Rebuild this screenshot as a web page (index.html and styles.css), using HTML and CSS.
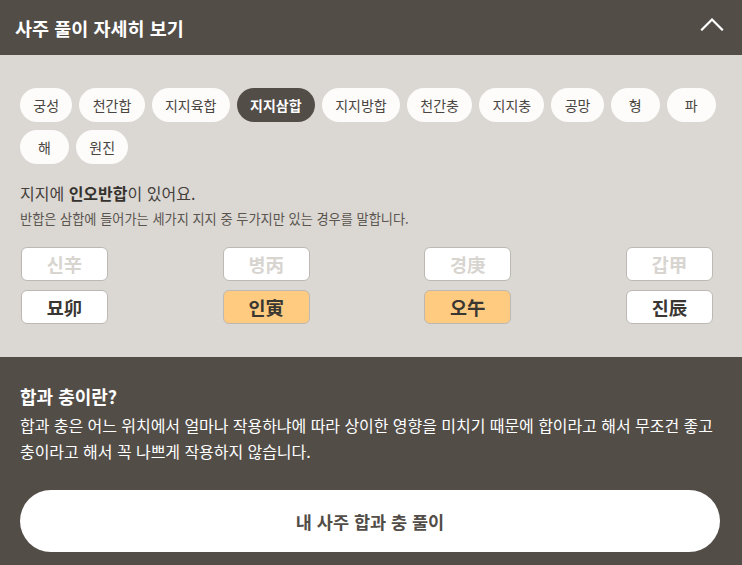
FILE: index.html
```html
<!DOCTYPE html>
<html lang="ko">
<head>
<meta charset="utf-8">
<title>사주 풀이 자세히 보기</title>
<link rel="stylesheet" href="styles.css">
</head>
<body>
<div class="page">
  <header class="header">
    <h1 class="header-title">사주 풀이 자세히 보기</h1>
    <svg class="chevron" width="24" height="14" viewBox="0 0 24 14" aria-hidden="true">
      <polyline points="2,12.5 12,2.5 22,12.5" fill="none" stroke="#ffffff" stroke-width="2.2" stroke-linecap="square"/>
    </svg>
  </header>

  <section class="detail">
    <div class="chips">
      <span class="chip">궁성</span>
      <span class="chip">천간합</span>
      <span class="chip">지지육합</span>
      <span class="chip chip-active">지지삼합</span>
      <span class="chip">지지방합</span>
      <span class="chip">천간충</span>
      <span class="chip">지지충</span>
      <span class="chip">공망</span>
      <span class="chip">형</span>
      <span class="chip">파</span>
      <span class="chip">해</span>
      <span class="chip">원진</span>
    </div>

    <p class="summary">지지에 <strong>인오반합</strong>이 있어요.</p>
    <p class="summary-sub">반합은 삼합에 들어가는 세가지 지지 중 두가지만 있는 경우를 말합니다.</p>

    <div class="pillars">
      <div class="pillar">
        <span class="cell cell-dim">신辛</span>
        <span class="cell">묘卯</span>
      </div>
      <div class="pillar">
        <span class="cell cell-dim">병丙</span>
        <span class="cell cell-hl">인寅</span>
      </div>
      <div class="pillar">
        <span class="cell cell-dim">경庚</span>
        <span class="cell cell-hl">오午</span>
      </div>
      <div class="pillar">
        <span class="cell cell-dim">갑甲</span>
        <span class="cell">진辰</span>
      </div>
    </div>
  </section>

  <section class="info">
    <h2 class="info-title">합과 충이란?</h2>
    <p class="info-text">합과 충은 어느 위치에서 얼마나 작용하냐에 따라 상이한 영향을 미치기 때문에 합이라고 해서 무조건 좋고<br>충이라고 해서 꼭 나쁘게 작용하지 않습니다.</p>
    <button class="cta" type="button">내 사주 합과 충 풀이</button>
  </section>
</div>
</body>
</html>
```

FILE: styles.css
```css
* {
  box-sizing: border-box;
}

html, body {
  margin: 0;
  padding: 0;
  background: #524d47;
}

body {
  font-family: "Noto Sans CJK KR", "Noto Sans", sans-serif;
  color: #3a3632;
}

.page {
  width: 742px;
}

.header {
  height: 55px;
  background: #524d47;
  display: flex;
  align-items: center;
  justify-content: space-between;
  padding: 0 18px 0 15px;
}

.header-title {
  margin: 0;
  font-size: 18.5px;
  font-weight: 700;
  color: #ffffff;
  letter-spacing: 0;
  line-height: 26px;
}

.chevron {
  display: block;
  margin-top: -7px;
}

.detail {
  background: #dbd8d4;
  padding: 33px 20px 33px 20px;
}

.chips {
  display: flex;
  flex-wrap: wrap;
  gap: 8px 7px;
}

.chip {
  height: 34px;
  min-width: 49px;
  padding: 0 13.3px;
  border-radius: 17px;
  background: #fdfcfb;
  color: #4a4540;
  font-size: 14px;
  display: flex;
  align-items: center;
  justify-content: center;
}

.chip-active {
  background: #524d47;
  color: #ffffff;
  font-weight: 700;
}

.summary {
  margin: 18px 0 0 0;
  font-size: 16px;
  line-height: 22px;
  color: #45403b;
}

.summary strong {
  font-weight: 700;
  color: #36322e;
}

.summary-sub {
  margin: 5px 0 0 0;
  font-size: 13.2px;
  line-height: 19px;
  color: #5a554f;
}

.pillars {
  display: flex;
  justify-content: space-between;
  margin: 19px 9px 0 1px;
}

.pillar {
  display: flex;
  flex-direction: column;
  gap: 9px;
}

.cell {
  width: 87px;
  height: 34px;
  border: 1px solid #bdb8b3;
  border-radius: 6px;
  background: #ffffff;
  display: flex;
  align-items: center;
  justify-content: center;
  font-size: 18.5px;
  font-weight: 700;
  color: #3a3632;
}

.cell-dim {
  color: #d8d4d0;
}

.cell-hl {
  background: #fecb80;
}

.info {
  background: #524d47;
  padding: 27px 20px 13px 20px;
}

.info-title {
  margin: 0;
  font-size: 18px;
  font-weight: 700;
  color: #ffffff;
  line-height: 24px;
}

.info-text {
  margin: 4px 0 0 0;
  font-size: 16px;
  line-height: 26px;
  color: #ffffff;
  white-space: nowrap;
  letter-spacing: -0.05px;
}

.cta {
  display: flex;
  align-items: center;
  justify-content: center;
  width: 700px;
  height: 62px;
  margin-top: 26px;
  border: 0;
  border-radius: 31px;
  background: #ffffff;
  color: #524d47;
  font-family: "Noto Sans CJK KR", "Noto Sans", sans-serif;
  font-size: 17.5px;
  font-weight: 700;
}
```
